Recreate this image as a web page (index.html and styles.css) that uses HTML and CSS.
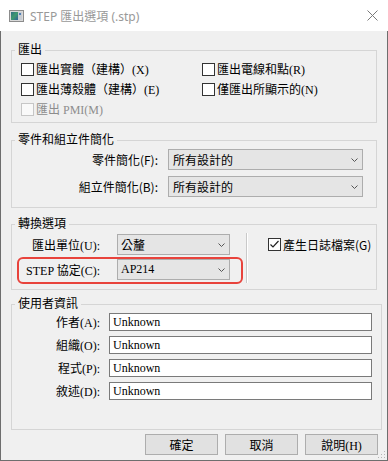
FILE: index.html
```html
<!DOCTYPE html>
<html lang="zh-Hant">
<head>
  <meta charset="UTF-8" />
  <title>STEP 匯出選項 (.stp)</title>
  <link rel="stylesheet" href="styles.css">
</head>
<body>
  <div class="window">
    <div class="titlebar">
      <svg class="app-icon" width="15" height="12" viewBox="0 0 15 12">
        <defs>
          <linearGradient id="pic" x1="0" y1="0" x2="1" y2="1">
            <stop offset="0" stop-color="#2f6f86"/>
            <stop offset="0.5" stop-color="#3f9a6e"/>
            <stop offset="1" stop-color="#2d5f9a"/>
          </linearGradient>
        </defs>
        <rect x="0.5" y="0.5" width="14" height="11" fill="#d9d9d9" stroke="#8c8c8c"/>
        <rect x="2" y="2" width="7" height="8" fill="url(#pic)"/>
        <rect x="9" y="2" width="4" height="8" fill="#c7ccd3"/>
        <rect x="10" y="3" width="2" height="2" fill="#4f7fb7"/>
      </svg>
      <span class="title">STEP 匯出選項 (.stp)</span>
      <svg class="close" width="11" height="11" viewBox="0 0 11 11">
        <path d="M0.5 0.5 L10.5 10.5 M10.5 0.5 L0.5 10.5" stroke="#7a7a7a" stroke-width="1"/>
      </svg>
    </div>

    <div class="content">
      <fieldset class="group">
        <legend>匯出</legend>
        <div class="check-grid">
          <label class="check"><span class="box"></span>匯出實體（建構）(X)</label>
          <label class="check"><span class="box"></span>匯出電線和點(R)</label>
          <label class="check"><span class="box"></span>匯出薄殼體（建構）(E)</label>
          <label class="check"><span class="box"></span>僅匯出所顯示的(N)</label>
          <label class="check disabled"><span class="box"></span>匯出 PMI(M)</label>
        </div>
      </fieldset>

      <fieldset class="group simplify">
        <legend>零件和組立件簡化</legend>
        <div class="form-row">
          <span class="label">零件簡化(F):</span>
          <div class="combo">所有設計的<svg width="7" height="4" viewBox="0 0 7 4"><path d="M0.5 0.5 L3.5 3.5 L6.5 0.5" fill="none" stroke="#555" stroke-width="1"/></svg></div>
        </div>
        <div class="form-row">
          <span class="label">組立件簡化(B):</span>
          <div class="combo">所有設計的<svg width="7" height="4" viewBox="0 0 7 4"><path d="M0.5 0.5 L3.5 3.5 L6.5 0.5" fill="none" stroke="#555" stroke-width="1"/></svg></div>
        </div>
      </fieldset>

      <fieldset class="group convert">
        <legend>轉換選項</legend>
        <div class="convert-body">
          <div class="convert-fields">
            <div class="form-row">
              <span class="label ming">匯出單位(U):</span>
              <div class="combo ming">公釐<svg width="7" height="4" viewBox="0 0 7 4"><path d="M0.5 0.5 L3.5 3.5 L6.5 0.5" fill="none" stroke="#555" stroke-width="1"/></svg></div>
            </div>
            <div class="form-row highlight">
              <span class="label ming">STEP 協定(C):</span>
              <div class="combo ming">AP214<svg width="7" height="4" viewBox="0 0 7 4"><path d="M0.5 0.5 L3.5 3.5 L6.5 0.5" fill="none" stroke="#555" stroke-width="1"/></svg></div>
            </div>
          </div>
          <div class="separator"></div>
          <label class="check log"><span class="box checked"><svg width="11" height="11" viewBox="0 0 11 11"><path d="M1.5 5.5 L4 8 L9.5 2" fill="none" stroke="#222" stroke-width="1.2"/></svg></span>產生日誌檔案(G)</label>
        </div>
      </fieldset>

      <fieldset class="group user">
        <legend>使用者資訊</legend>
        <div class="form-row">
          <span class="label ming">作者(A):</span>
          <div class="field">Unknown</div>
        </div>
        <div class="form-row">
          <span class="label ming">組織(O):</span>
          <div class="field">Unknown</div>
        </div>
        <div class="form-row">
          <span class="label ming">程式(P):</span>
          <div class="field">Unknown</div>
        </div>
        <div class="form-row">
          <span class="label ming">敘述(D):</span>
          <div class="field">Unknown</div>
        </div>
      </fieldset>

      <div class="buttons">
        <button class="btn">確定</button>
        <button class="btn">取消</button>
        <button class="btn">說明(H)</button>
      </div>
    </div>

    <svg class="grip" width="9" height="9" viewBox="0 0 9 9">
      <rect x="7" y="1" width="1" height="1" fill="#b5b5b5"/>
      <rect x="4" y="4" width="1" height="1" fill="#b5b5b5"/>
      <rect x="7" y="4" width="1" height="1" fill="#b5b5b5"/>
      <rect x="1" y="7" width="1" height="1" fill="#b5b5b5"/>
      <rect x="4" y="7" width="1" height="1" fill="#b5b5b5"/>
      <rect x="7" y="7" width="1" height="1" fill="#b5b5b5"/>
    </svg>
  </div>
</body>
</html>
```

FILE: styles.css
```css
body {
  margin: 0;
  background: #ffffff;
  color: #000000;
  font-family: "Noto Sans CJK TC", sans-serif;
  font-size: 12px;
}

.window {
  position: relative;
  width: 388px;
  height: 461px;
}

.titlebar {
  display: flex;
  align-items: center;
  height: 31px;
  padding-left: 9px;
  background: #ffffff;
}

.app-icon {
  margin-right: 6px;
}

.title {
  color: #999999;
  font-family: "Noto Sans", "Noto Sans CJK TC", sans-serif;
  font-size: 12px;
}

.close {
  margin-left: auto;
  margin-right: 10px;
}

.content {
  box-sizing: border-box;
  height: 430px;
  padding: 11px 0 0 10px;
  background: #f0f0f0;
  border: 1px solid #6e6e6e;
  border-top: none;
}

.ming {
  font-family: "Liberation Serif", "Noto Sans CJK TC", serif;
}

/* group boxes */
.group {
  box-sizing: border-box;
  width: 366px;
  min-width: 0;
  margin: 0;
  padding: 0 0 3px 0;
  border: 1px solid #d5d5d5;
}

.group legend {
  margin-left: 3px;
  padding: 0 3px 3px;
  line-height: 14px;
}

.simplify {
  margin-top: 9px;
  padding-bottom: 10px;
}

.convert {
  margin-top: 8px;
  padding: 1px 0 6px 0;
}

.user {
  width: 371px;
  margin-top: 6px;
  padding-bottom: 29px;
}

/* checkboxes */
.check-grid {
  display: grid;
  grid-template-columns: 181px 1fr;
  padding-left: 9px;
}

.check {
  display: flex;
  align-items: center;
  height: 20px;
  font-family: "Liberation Serif", "Noto Sans CJK TC", serif;
}

.box {
  display: flex;
  align-items: center;
  justify-content: center;
  box-sizing: border-box;
  width: 13px;
  height: 13px;
  margin-right: 2px;
  border: 1px solid #333333;
  background: #ffffff;
}

.check.disabled {
  color: #8d8d8d;
}

.check.disabled .box {
  border-color: #c6c6c6;
  background: #f9f9f9;
}

/* label + control rows */
.form-row {
  display: flex;
  align-items: center;
  height: 21px;
}

.form-row + .form-row {
  margin-top: 6px;
}

.label {
  flex: none;
  text-align: right;
  white-space: nowrap;
}

.simplify .label {
  width: 146px;
  margin-right: 10px;
}

.combo {
  display: flex;
  align-items: center;
  justify-content: space-between;
  box-sizing: border-box;
  width: 195px;
  height: 21px;
  padding: 0 4px 0 4px;
  border: 1px solid #adadad;
  background: #e5e5e5;
}

.convert-body {
  display: flex;
  align-items: flex-start;
}

.convert .form-row + .form-row {
  margin-top: 4px;
}

.convert .label {
  width: 88px;
  margin-right: 17px;
}

.convert .combo {
  width: 113px;
  padding-left: 3px;
}

.highlight {
  position: relative;
}

.highlight::after {
  content: "";
  position: absolute;
  left: 5px;
  right: -13px;
  top: -2px;
  bottom: -4px;
  border: 2px solid #e8433c;
  border-radius: 6px;
}

.separator {
  width: 1px;
  height: 50px;
  margin: -1px 0 0 16px;
  background: #c9c9c9;
  border-right: 1px solid #ffffff;
}

.check.log {
  margin: 0 0 0 20px;
  height: 21px;
  font-family: "Noto Sans CJK TC", sans-serif;
}

/* user info */
.user .form-row {
  height: 18px;
}

.user .form-row + .form-row {
  margin-top: 5px;
}

.user .label {
  width: 88px;
  margin-right: 9px;
}

.field {
  box-sizing: border-box;
  width: 263px;
  height: 18px;
  padding-left: 3px;
  border: 1px solid #7a7a7a;
  background: #ffffff;
  font-family: "Liberation Serif", serif;
  line-height: 16px;
}

/* buttons */
.buttons {
  display: flex;
  margin-top: 4px;
  padding-left: 134px;
}

.btn {
  box-sizing: border-box;
  width: 73px;
  height: 21px;
  padding: 0;
  border: 1px solid #adadad;
  background: #e1e1e1;
  color: #000000;
  font-family: "Liberation Serif", "Noto Sans CJK TC", serif;
  font-size: 12px;
}

.btn + .btn {
  margin-left: 7px;
}

.grip {
  position: absolute;
  right: 2px;
  bottom: 2px;
}
```
